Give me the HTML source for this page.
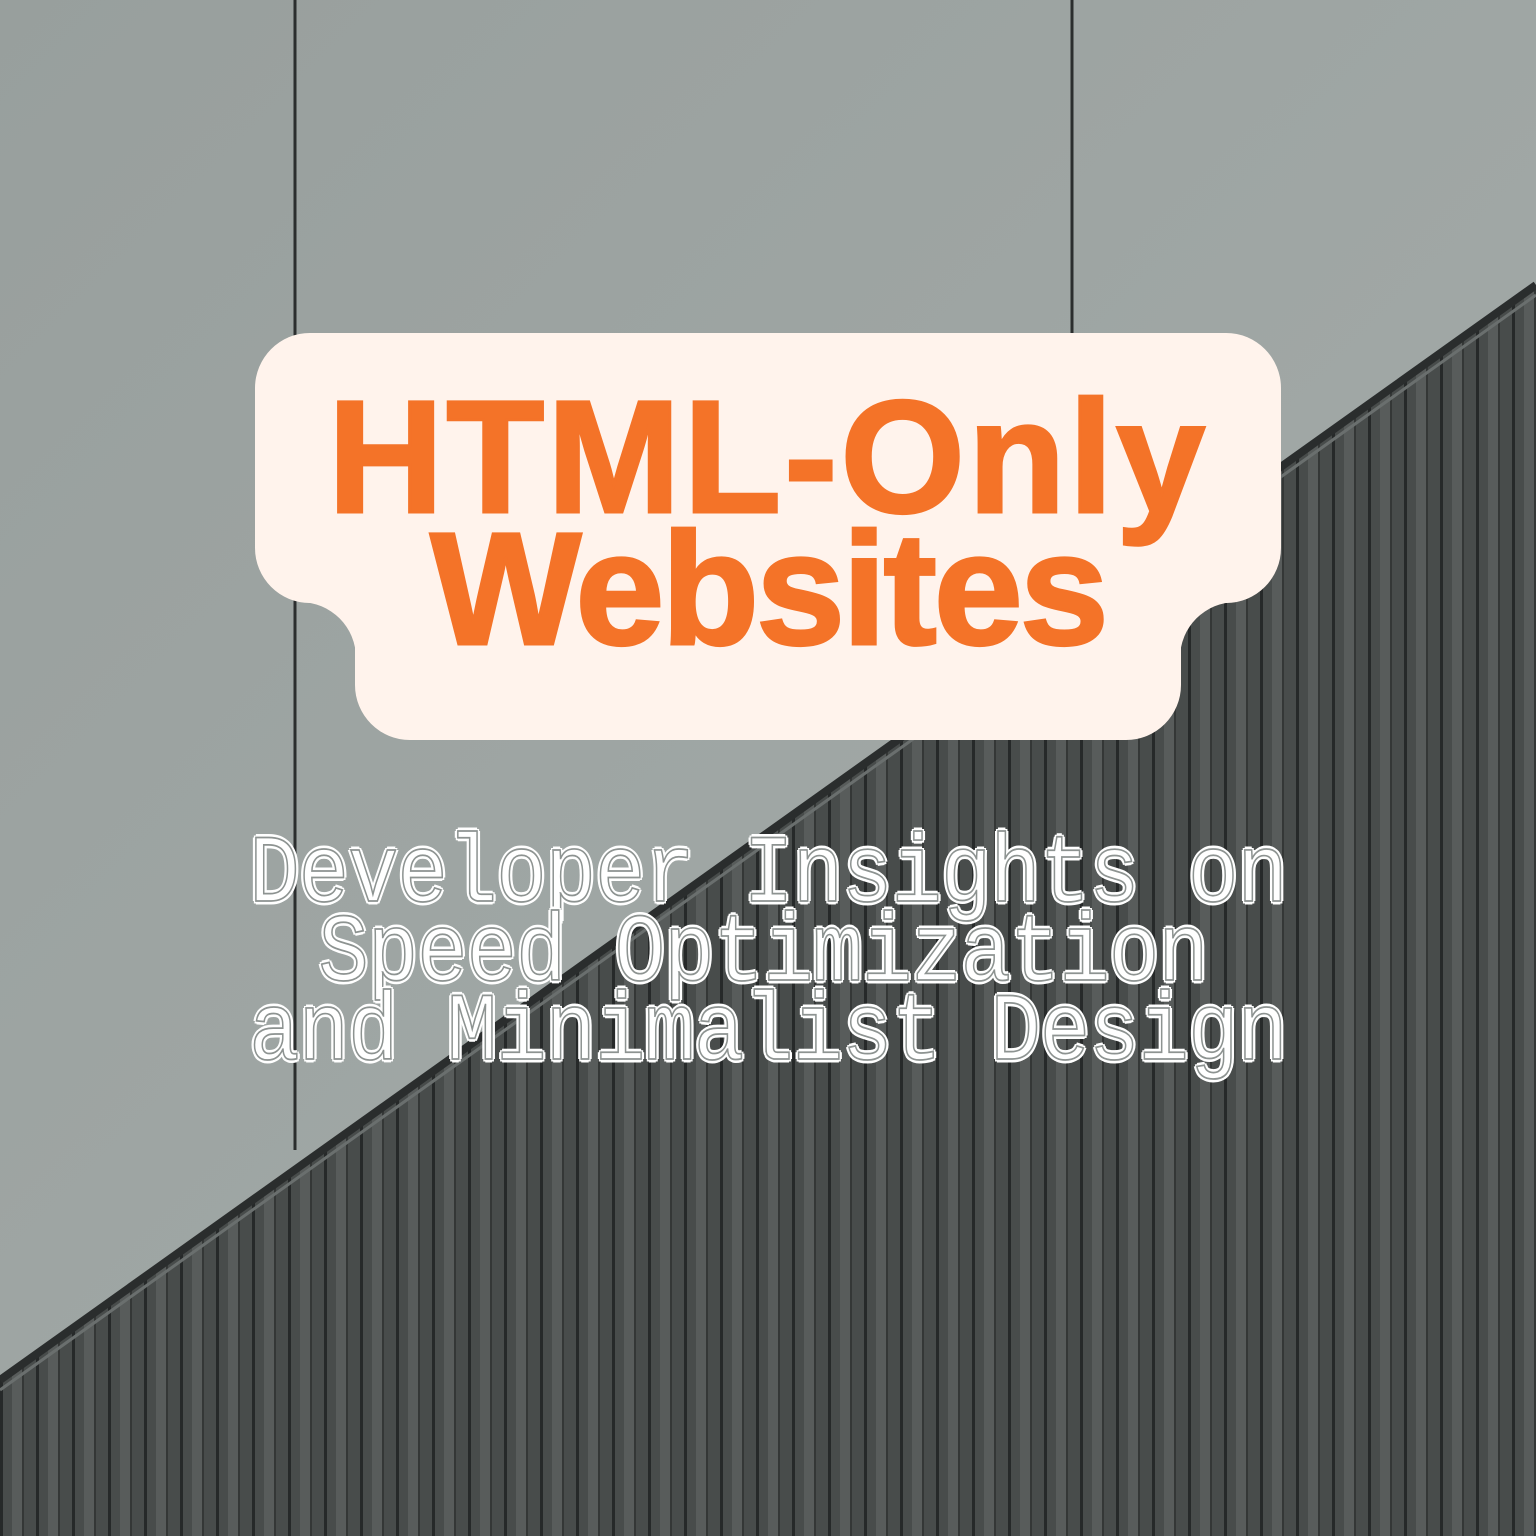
<!DOCTYPE html>
<html><head><style>
html,body{margin:0;padding:0}
body{width:1536px;height:1536px;position:relative;overflow:hidden;background:#9ca3a1}
.t{position:absolute;left:0;width:1536px;text-align:center;white-space:nowrap}
.o{font-family:"Liberation Sans",sans-serif;font-weight:bold;font-size:160px;color:#f47328;-webkit-text-stroke:3px #f47328;line-height:1}
.w{font-family:"Liberation Mono",monospace;font-size:84px;color:#fff;line-height:1;letter-spacing:-1px;transform:scaleY(1.15);-webkit-text-stroke:1.5px #8d9391;text-shadow:3px 0 #fff,-3px 0 #fff,0 3px #fff,0 -3px #fff,2px 2px #fff,-2px -2px #fff,2px -2px #fff,-2px 2px #fff}
</style></head><body>
<svg width="1536" height="1536" style="position:absolute;left:0;top:0">
<defs>
<linearGradient id="bg" x1="0" y1="0" x2="1" y2="1"><stop offset="0" stop-color="#989f9d"/><stop offset="1" stop-color="#a6adab"/></linearGradient>
<pattern id="cor" width="36" height="10" patternUnits="userSpaceOnUse">
<rect width="36" height="10" fill="#484c4b"/><rect x="0" width="3" height="10" fill="#262929"/><rect x="12" width="10" height="10" fill="#585c5b"/><rect x="22" width="2" height="10" fill="#343736"/>
</pattern>
</defs>
<rect width="1536" height="1536" fill="url(#bg)"/>
<line x1="295" y1="0" x2="295" y2="1150" stroke="#2b2e2e" stroke-width="3"/>
<line x1="1072" y1="0" x2="1072" y2="340" stroke="#2b2e2e" stroke-width="3"/>
<polygon points="0,1380 1536,285 1536,1536 0,1536" fill="url(#cor)"/>
<line x1="0" y1="1380" x2="1536" y2="285" stroke="#2a2d2d" stroke-width="8"/>
<line x1="0" y1="1390" x2="1536" y2="295" stroke="#6a6f6e" stroke-width="3"/>
<rect x="255" y="333" width="1026" height="270" rx="55" fill="#fff3ec"/>
<rect x="355" y="540" width="826" height="200" rx="55" fill="#fff3ec"/>
<path d="M300 602 L356 602 L356 658 A56 56 0 0 0 300 602 Z" fill="#fff3ec"/>
<path d="M1236 602 L1180 602 L1180 658 A56 56 0 0 1 1236 602 Z" fill="#fff3ec"/>
</svg>
<div class="t o" style="top:377px;letter-spacing:3px">HTML-Only</div>
<div class="t o" style="top:509px;letter-spacing:-3px">Websites</div>
<div class="t w" style="top:835px">Developer Insights on</div>
<div class="t w" style="top:914px;margin-left:-5px">Speed Optimization</div>
<div class="t w" style="top:993px">and Minimalist Design</div>
</body></html>
